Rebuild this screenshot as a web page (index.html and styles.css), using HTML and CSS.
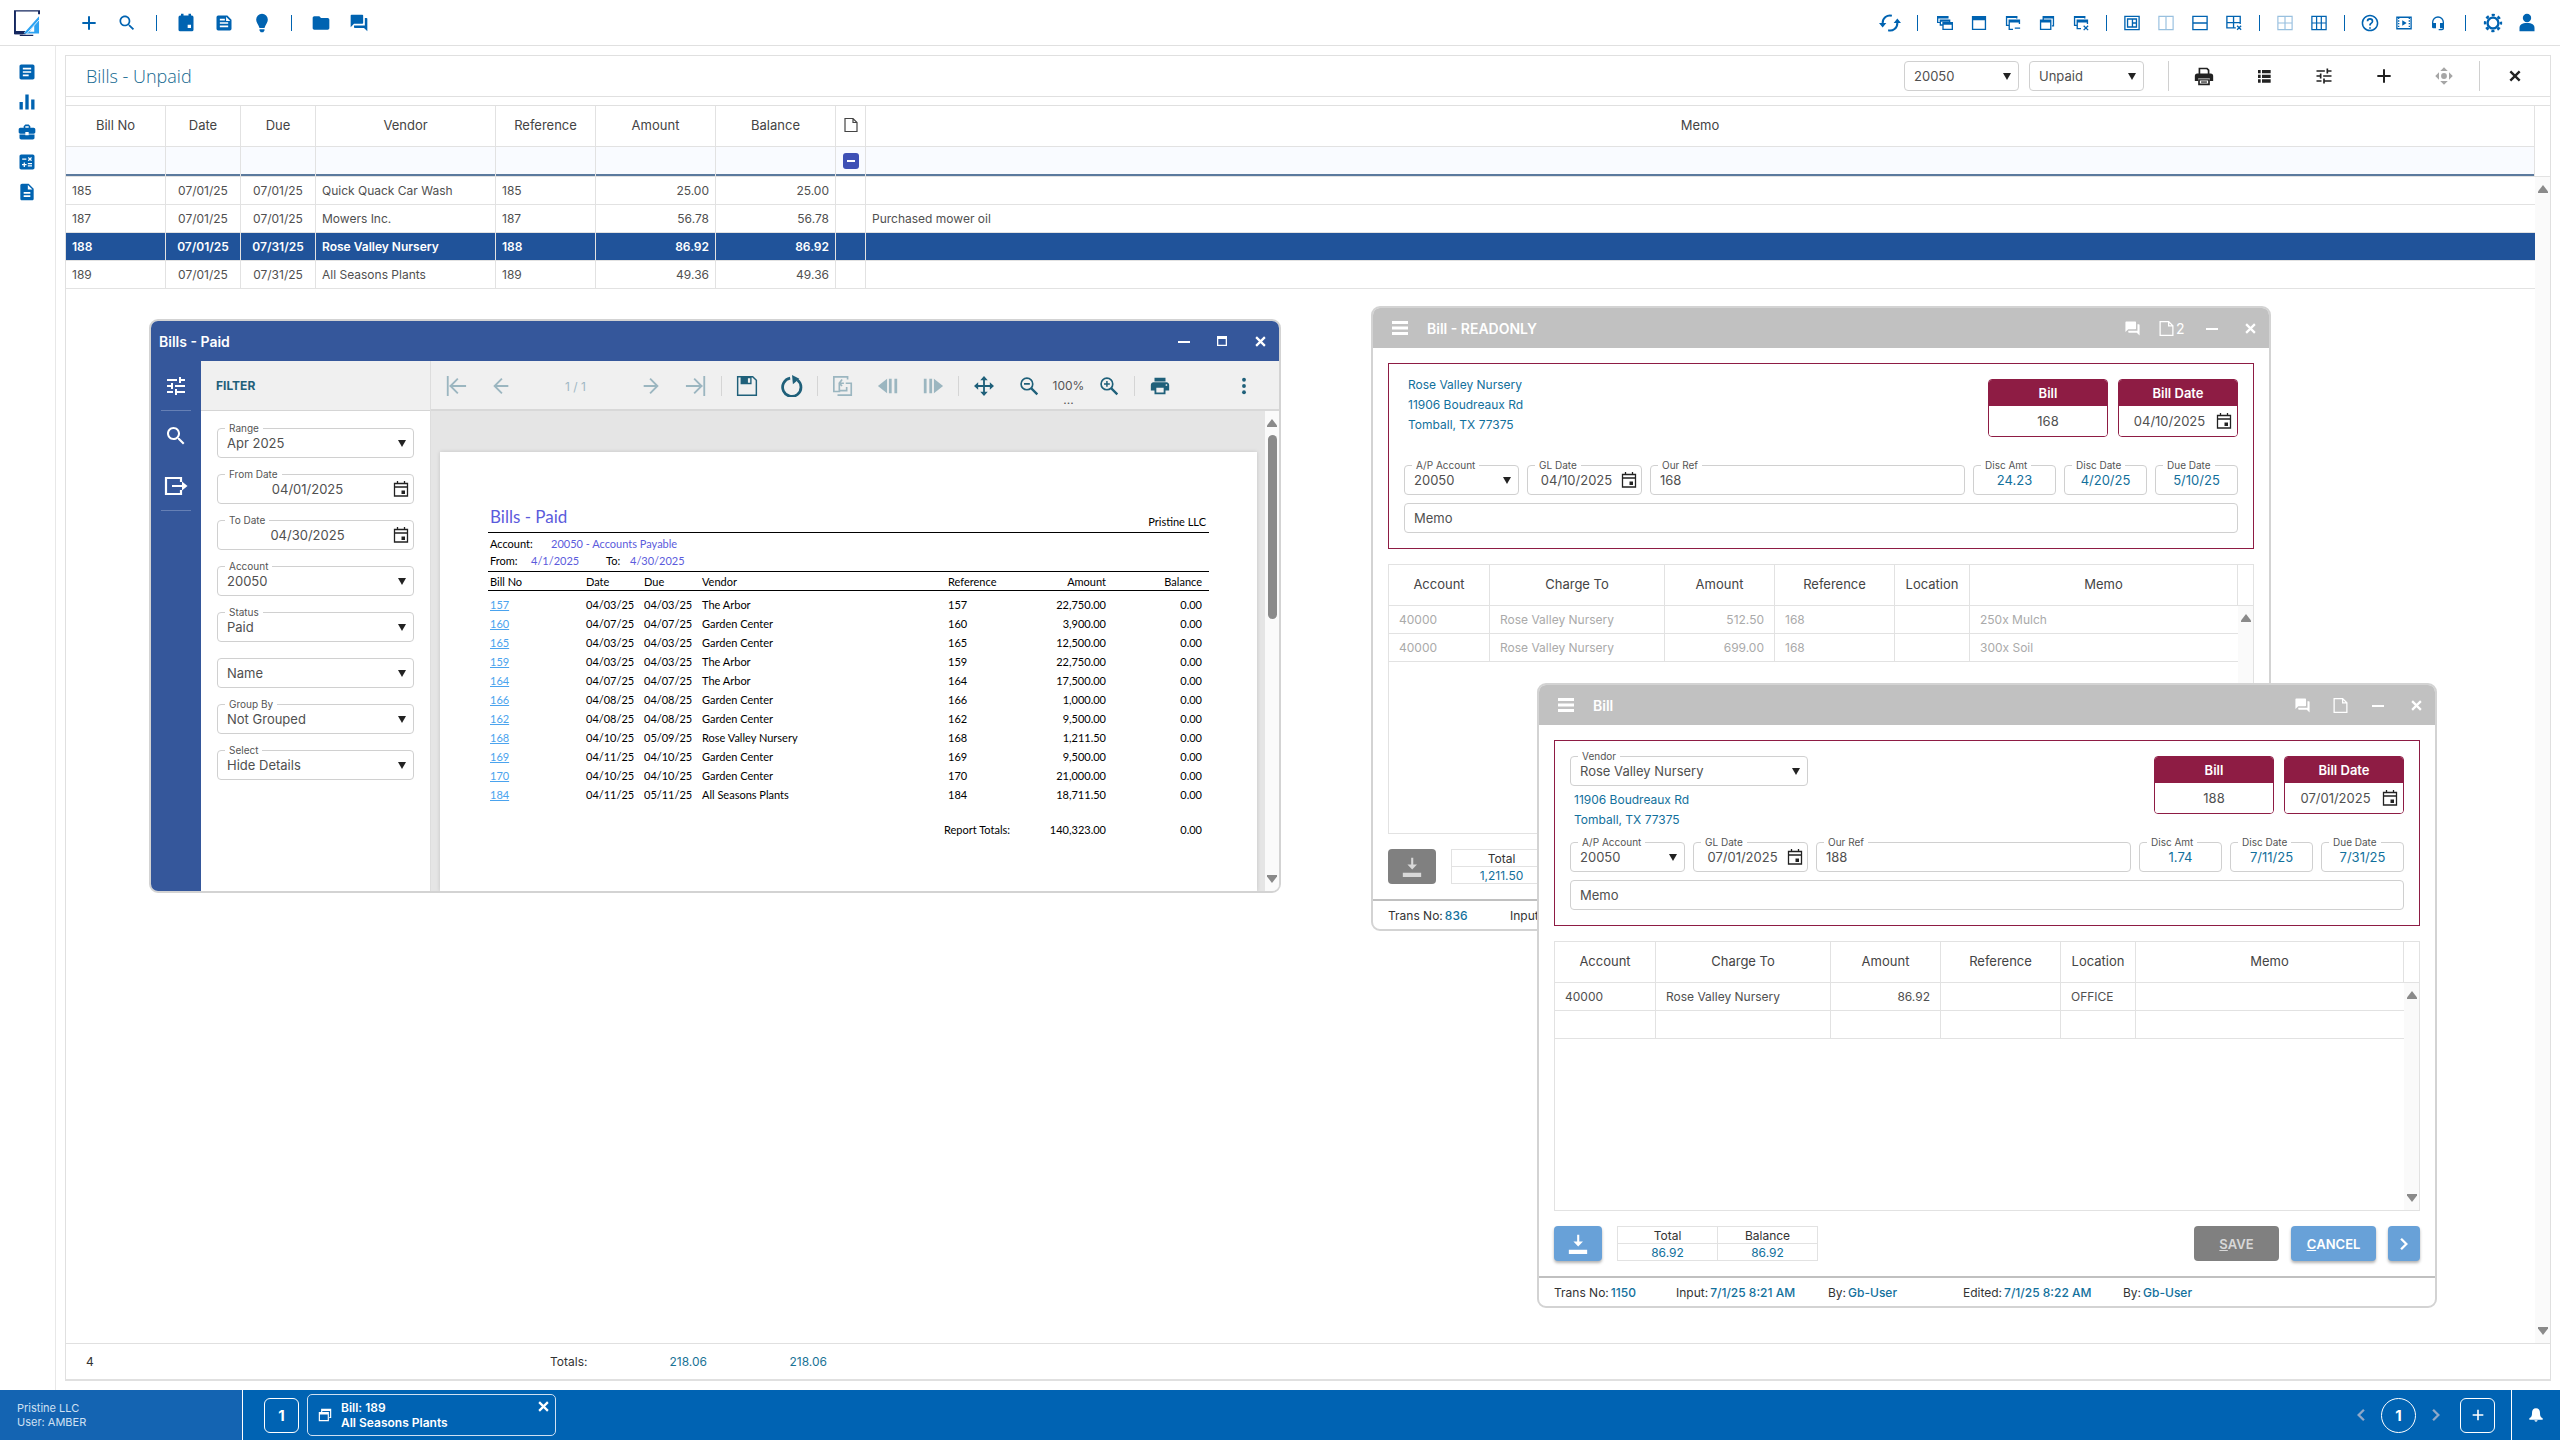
FILE: index.html
```html
<!DOCTYPE html>
<html lang="en">
<head>
  <meta charset="UTF-8">
  <meta name="viewport" content="width=device-width, initial-scale=1.0">
  <title>Bills - Unpaid</title>
  <link rel="stylesheet" href="styles.css">
</head>
<body>
  <!-- icon sprite -->
  <svg class="sprite" aria-hidden="true">
    <symbol id="i-plus" viewBox="0 0 24 24"><path d="M10.800 4h2.400v6.800H20v2.400h-6.800V20h-2.400v-6.800H4v-2.400h6.800z"/></symbol>
    <symbol id="i-search" viewBox="0 0 24 24"><path d="M15.500 14h-.790l-.280-.270C15.410 12.590 16 11.110 16 9.500 16 5.910 13.090 3 9.500 3S3 5.910 3 9.500 5.910 16 9.500 16c1.610 0 3.090-.590 4.230-1.570l.270.280v.790l5 4.990L20.490 19l-4.990-5zm-6 0C7.010 14 5 11.990 5 9.500S7.010 5 9.500 5 14 7.010 14 9.500 11.990 14 9.500 14z"/></symbol>
    <symbol id="i-calfull" viewBox="0 0 24 24"><path fill-rule="evenodd" d="M6 1v2H5a2 2 0 0 0-2 2v15a2 2 0 0 0 2 2h14a2 2 0 0 0 2-2V5a2 2 0 0 0-2-2h-1V1h-3v2H9V1zM14 14h4v4h-4z"/></symbol>
    <symbol id="i-note" viewBox="0 0 24 24"><path fill-rule="evenodd" d="M5 3a2 2 0 0 0-2 2v14a2 2 0 0 0 2 2h14a2 2 0 0 0 2-2V8l-5-5zM7 7h6v2H7zM7 11h10v2H7zM7 15h10v2H7zM14.500 4.500L19.500 9.500H14.500z"/></symbol>
    <symbol id="i-bulb" viewBox="0 0 24 24"><path d="M12 1a7 7 0 0 0-7 7c0 3.500 3 6 4 10h6c1-4 4-6.500 4-10a7 7 0 0 0-7-7zM9 19.500h6v1.500l-1.500 2h-3L9 21z"/></symbol>
    <symbol id="i-folder" viewBox="0 0 24 24"><path d="M10 4H4c-1.100 0-2 .9-2 2v12c0 1.100.9 2 2 2h16c1.100 0 2-.9 2-2V8c0-1.100-.9-2-2-2h-8z"/></symbol>
    <symbol id="i-chat" viewBox="0 0 24 24"><path d="M21 6h-2v9H6v2c0 .550.450 1 1 1h11l4 4V7c0-.550-.450-1-1-1zm-4 6V3c0-.550-.450-1-1-1H3c-.550 0-1 .450-1 1v14l4-4h10c.550 0 1-.450 1-1z"/></symbol>
    <symbol id="i-article" viewBox="0 0 24 24"><path d="M19 3H5c-1.100 0-2 .9-2 2v14c0 1.100.9 2 2 2h14c1.100 0 2-.9 2-2V5c0-1.100-.9-2-2-2zm-5 14H7v-2h7v2zm3-4H7v-2h10v2zm0-4H7V7h10v2z"/></symbol>
    <symbol id="i-chart" viewBox="0 0 24 24"><path d="M3 12h4v9H3zM10 3h4v18h-4zM17 9h4v12h-4z"/></symbol>
    <symbol id="i-case" viewBox="0 0 24 24"><path d="M10 16v-1H3v4c0 1.110.890 2 2 2h14c1.110 0 2-.890 2-2v-4h-7v1zm10-9h-4V5l-2-2h-4L8 5v2H4c-1.100 0-2 .9-2 2v3c0 1.110.890 2 2 2h6v-2h4v2h6c1.100 0 2-.9 2-2V9c0-1.100-.9-2-2-2zm-6 0h-4V5h4z"/></symbol>
    <symbol id="i-calc" viewBox="0 0 24 24"><path d="M19 3H5c-1.100 0-2 .9-2 2v14c0 1.100.9 2 2 2h14c1.100 0 2-.9 2-2V5c0-1.100-.9-2-2-2zm-5.970 4.060L14.090 6l1.410 1.410L16.910 6l1.060 1.060-1.410 1.410 1.410 1.410-1.060 1.060-1.410-1.400-1.410 1.410-1.060-1.060 1.410-1.410zM6.250 7.720h5v1.500h-5zM11.500 16h-2v2H8v-2H6v-1.500h2v-2h1.500v2h2zm6.500 1.250h-5v-1.500h5zm0-2.500h-5v-1.500h5z"/></symbol>
    <symbol id="i-doc" viewBox="0 0 24 24"><path d="M14 2H6c-1.100 0-2 .9-2 2v16c0 1.100.890 2 2 2h12c1.100 0 2-.9 2-2V8zm2 16H8v-2h8zm0-4H8v-2h8zm-3-5V3.500L18.500 9z"/></symbol>
    <symbol id="i-tune" viewBox="0 0 24 24"><path d="M3 17v2h6v-2zM3 5v2h10V5zm10 16v-2h8v-2h-8v-2h-2v6zM7 9v2H3v2h4v2h2V9zm14 4v-2H11v2zm-6-4h2V7h4V5h-4V3h-2z"/></symbol>
    <symbol id="i-refresh" viewBox="0 0 24 24"><g fill="none" stroke="currentColor" stroke-width="2.200"><path d="M4 14V12a8 8 0 0 1 10-8"/><path d="M20 10v2a8 8 0 0 1-10 8"/></g><path d="M0 12h8l-4 5zM16 12h8l-4-5z"/></symbol>
    <symbol id="i-cascade" viewBox="0 0 18 18"><path fill-rule="evenodd" d="M0 1h13v3h-1V4H1.500v4H3v1H0zM3 5h12v3h-1.500v-.5H4.500v3H6V12H3zM6 8h12v9H6zM7.500 11v4.500h9V11z"/></symbol>
    <symbol id="i-window" viewBox="0 0 18 18"><path fill-rule="evenodd" d="M1 1h16v16H1zM2.500 6v9.500h13V6z"/></symbol>
    <symbol id="i-winmin" viewBox="0 0 18 18"><path fill-rule="evenodd" d="M1 1h13v3h-1.500v-.5h-10V11H4v1.500H1zM4 5h13v5h-1.500V8.500h-10v7H9V17H4zM11 14h6v1.500h-6z"/></symbol>
    <symbol id="i-restore" viewBox="0 0 18 18"><path fill-rule="evenodd" d="M4 1h13v12h-2.500v-1.500h1V4h-10v1H4zM1 5h13v12H1zM2.500 8.500v7h10v-7z"/></symbol>
    <symbol id="i-winclose" viewBox="0 0 18 18"><path fill-rule="evenodd" d="M1 1h13v3h-1.500v-.5h-10V11H4v1.500H1zM4 5h13v5h-1.500V8.500h-10v6H9V16H4z"/><path d="M12 12l5 5M17 12l-5 5" stroke="currentColor" stroke-width="1.500"/></symbol>
    <symbol id="i-dash" viewBox="0 0 18 18"><g fill="none" stroke="currentColor" stroke-width="1.500"><path d="M1 1.500h16v15H1z"/><path d="M4 4.500h10v9H4zM9.500 4.500v9M9.500 9H14"/></g></symbol>
    <symbol id="i-cols" viewBox="0 0 18 18"><path d="M1 1.500h16v15H1zM9 1.500v15" fill="none" stroke="currentColor" stroke-width="1.300"/></symbol>
    <symbol id="i-rows" viewBox="0 0 18 18"><path d="M1 1.500h16v15H1zM1 9h16" fill="none" stroke="currentColor" stroke-width="1.500"/></symbol>
    <symbol id="i-gridx" viewBox="0 0 18 18"><path d="M11 14.500H1v-13h15V10M1 8.500h15M8.500 1.500v13M12.500 12l4.500 4.500M17 12l-4.500 4.500" fill="none" stroke="currentColor" stroke-width="1.500"/></symbol>
    <symbol id="i-grid4" viewBox="0 0 18 18"><path d="M1 1.500h16v15H1zM1 9h16M9 1.500v15" fill="none" stroke="currentColor" stroke-width="1.300"/></symbol>
    <symbol id="i-grid6" viewBox="0 0 18 18"><path d="M1 1.500h16v15H1zM1 9h16M6.300 1.500v15M11.600 1.500v15" fill="none" stroke="currentColor" stroke-width="1.400"/></symbol>
    <symbol id="i-help" viewBox="0 0 24 24"><path d="M12 2C6.480 2 2 6.480 2 12s4.480 10 10 10 10-4.480 10-10S17.520 2 12 2zm1 17h-2v-2h2zm-1 1.200A8.200 8.200 0 1 1 12 3.800a8.200 8.200 0 0 1 0 16.400zM12 6a4 4 0 0 0-4 4h2a2 2 0 1 1 4 0c0 2-3 1.750-3 5h2c0-2.250 3-2.500 3-5a4 4 0 0 0-4-4z"/></symbol>
    <symbol id="i-film" viewBox="0 0 18 18"><path d="M1 2.500h16v13H1z" fill="none" stroke="currentColor" stroke-width="1.500"/><path d="M3 3v12M15 3v12" stroke="currentColor" stroke-width="1.500" stroke-dasharray="1.500 1.500"/><path d="M7 6l5 3-5 3z"/></symbol>
    <symbol id="i-headset" viewBox="0 0 24 24"><path d="M4 17v-6a8 8 0 0 1 16 0v9a2 2 0 0 1-2 2h-5" fill="none" stroke="currentColor" stroke-width="2"/><path d="M3 12h6v8H5a2 2 0 0 1-2-2zM15 12h6v8h-6z"/></symbol>
    <symbol id="i-gear" viewBox="0 0 24 24"><circle cx="12" cy="12" r="6.500" fill="none" stroke="currentColor" stroke-width="2.800"/><circle cx="12" cy="12" r="9.500" fill="none" stroke="currentColor" stroke-width="3" stroke-dasharray="3.730 3.730" stroke-dashoffset="1.860"/></symbol>
    <symbol id="i-user" viewBox="0 0 24 24"><circle cx="12" cy="6" r="5"/><path d="M3 22v-4c0-4 3-6 9-6s9 2 9 6v4z"/></symbol>
    <symbol id="i-print-line" viewBox="0 0 24 24"><path fill-rule="evenodd" d="M6 2h10l2.500 2.500V9H20a3 3 0 0 1 3 3v6h-4v-3H5v3H1v-6a3 3 0 0 1 3-3h1.500V2zm1.500 2v5h9V5.500L15 4z"/><path fill-rule="evenodd" d="M5 16h14v7H5zM7 17.500v3.500h10v-3.500z"/><path d="M8.500 18.500h7V20h-7z"/></symbol>
    <symbol id="i-list" viewBox="0 0 24 24"><path d="M3 3h4v5H3zM9 3h13v5H9zM3 10h4v5H3zM9 10h13v5H9zM3 17h4v5H3zM9 17h13v5H9z"/></symbol>
    <symbol id="i-target" viewBox="0 0 24 24"><circle cx="12" cy="12" r="3.500"/><path d="M7.500 6L12 1.500 16.500 6zM7.500 18l4.500 4.500 4.500-4.500zM6 7.500L1.500 12 6 16.500zM18 7.500l4.500 4.500-4.500 4.500z"/></symbol>
    <symbol id="i-x" viewBox="0 0 24 24"><path d="M5 5l14 14M19 5L5 19" stroke="currentColor" stroke-width="3.600"/></symbol>
    <symbol id="i-page" viewBox="0 0 16 16"><path d="M2 1.500h8l4 4v9H2zM10 1.500v4h4" fill="none" stroke="currentColor" stroke-width="1.200"/></symbol>
    <symbol id="i-cal" viewBox="0 0 16 16"><path d="M1.500 2.500h13v12.500h-13zM1.500 6h13M4.500 0v3M11.500 0v3" fill="none" stroke="currentColor" stroke-width="1.300"/><path d="M8.500 9.500h3.500V13H8.500z"/></symbol>
    <symbol id="i-caret" viewBox="0 0 8 7"><path d="M0 0h8L4 7z"/></symbol>
    <symbol id="i-up" viewBox="0 0 10 8"><path d="M5 0l5 6.500V8H0V6.500z"/></symbol>
    <symbol id="i-down" viewBox="0 0 10 8"><path d="M5 8l5-6.500V0H0v1.500z"/></symbol>
    <symbol id="i-menu" viewBox="0 0 16 14"><path d="M0 0h16v3H0zM0 5.500h16v3H0zM0 11h16v3H0z"/></symbol>
    <symbol id="i-min" viewBox="0 0 12 12"><path d="M0 6h12v2H0z"/></symbol>
    <symbol id="i-max" viewBox="0 0 12 12"><path fill-rule="evenodd" d="M1 1h10v10H1zM2.300 4v5.700h7.400V4z"/></symbol>
    <symbol id="i-first" viewBox="0 0 24 24"><path d="M3 1v22M23 12H5M14 4l-8 8 8 8" fill="none" stroke="currentColor" stroke-width="2"/></symbol>
    <symbol id="i-prev" viewBox="0 0 24 24"><path d="M20 12H5M13 4l-8 8 8 8" fill="none" stroke="currentColor" stroke-width="2"/></symbol>
    <symbol id="i-next" viewBox="0 0 24 24"><path d="M4 12h15M11 4l8 8-8 8" fill="none" stroke="currentColor" stroke-width="2"/></symbol>
    <symbol id="i-last" viewBox="0 0 24 24"><path d="M21 1v22M1 12h18M10 4l8 8-8 8" fill="none" stroke="currentColor" stroke-width="2"/></symbol>
    <symbol id="i-save" viewBox="0 0 24 24"><path d="M1.800 1.800h16.400l4 4v16.400H1.800z" fill="none" stroke="currentColor" stroke-width="1.600"/><path fill-rule="evenodd" d="M5 2h12v8H5zM13 3.500v5h2.500v-5z"/></symbol>
    <symbol id="i-reload" viewBox="0 0 24 24"><path d="M18 5.500a10 10 0 1 1-8-2" fill="none" stroke="currentColor" stroke-width="3"/><path d="M12 0l8 4-7 6z"/></symbol>
    <symbol id="i-multi" viewBox="0 0 24 24"><path d="M9 18H2V2h15v3M6 22h15V9h-6M16 13v4H8V9h5M11 5L8 9l3 3" fill="none" stroke="currentColor" stroke-width="1.800"/></symbol>
    <symbol id="i-back" viewBox="0 0 24 24"><path d="M1 12l10-8v16zM13 4h3v16h-3zM19 4h3v16h-3z"/></symbol>
    <symbol id="i-fwd" viewBox="0 0 24 24"><path d="M23 12L13 4v16zM8 4h3v16H8zM2 4h3v16H2z"/></symbol>
    <symbol id="i-move" viewBox="0 0 24 24"><path d="M12 3v18M3 12h18" stroke="currentColor" stroke-width="2.200"/><path d="M12 0l4.500 5h-9zM12 24l4.500-5h-9zM0 12l5-4.500v9zM24 12l-5-4.500v9z"/></symbol>
    <symbol id="i-zoomout" viewBox="0 0 24 24"><circle cx="9.500" cy="9.500" r="7" fill="none" stroke="currentColor" stroke-width="2"/><path d="M14.500 14.500l7.500 7.500" stroke="currentColor" stroke-width="2.800"/><path d="M6 8.500h7v2H6z"/></symbol>
    <symbol id="i-zoomin" viewBox="0 0 24 24"><circle cx="9.500" cy="9.500" r="7" fill="none" stroke="currentColor" stroke-width="2"/><path d="M14.500 14.500l7.500 7.500" stroke="currentColor" stroke-width="2.800"/><path d="M6 8.600h2.600V6h1.800v2.600H13v1.800h-2.600V13H8.600v-2.600H6z"/></symbol>
    <symbol id="i-print" viewBox="0 0 24 24"><path d="M19 8H5c-1.660 0-3 1.340-3 3v6h4v4h12v-4h4v-6c0-1.660-1.340-3-3-3zm-3 11H8v-5h8zm3-7c-.550 0-1-.450-1-1s.450-1 1-1 1 .450 1 1-.450 1-1 1zM18 3H6v4h12z"/></symbol>
    <symbol id="i-more" viewBox="0 0 24 24"><circle cx="12" cy="4.500" r="2.300"/><circle cx="12" cy="12" r="2.300"/><circle cx="12" cy="19.500" r="2.300"/></symbol>
    <symbol id="i-export" viewBox="0 0 24 24"><path d="M17 8V4H2v16h15v-4M8 12h13" fill="none" stroke="currentColor" stroke-width="2.200"/><path d="M18 7.500l5.500 4.500-5.500 4.500z"/></symbol>
    <symbol id="i-download" viewBox="0 0 24 24"><path d="M11 1h2.500v8H18l-5.750 6L6.500 9H11zM1 19h22v5H1z"/></symbol>
    <symbol id="i-chev-l" viewBox="0 0 12 12"><path d="M8.500 1.500L4 6l4.500 4.500" fill="none" stroke="currentColor" stroke-width="2"/></symbol>
    <symbol id="i-chev-r" viewBox="0 0 12 12"><path d="M3.500 1.500L8 6l-4.500 4.500" fill="none" stroke="currentColor" stroke-width="2"/></symbol>
    <symbol id="i-bell" viewBox="0 0 24 24"><path d="M12 22a2.500 2.500 0 0 0 2.500-2h-5a2.500 2.500 0 0 0 2.500 2zM12 2c-4 0-6 3-6 7 0 5-1 6-4 8v2h20v-2c-3-2-4-3-4-8 0-4-2-7-6-7z"/></symbol>
  </svg>

  <header class="topbar">
    <svg class="logo" viewBox="0 0 27 42" preserveAspectRatio="none" role="img" aria-label="Home">
      <path d="M26 7V1.500H1V38h11" fill="none" stroke="#14275f" stroke-width="2"/>
      <path d="M1 34h11l-3 5H1zM6 40h14v2H6z" fill="#14275f"/>
      <path d="M26 10v28H10zM21 25l-5 10h5z" fill="#2ea3f2" fill-rule="evenodd"/>
      <path d="M14 37L26 16" stroke="#fff" stroke-width="1"/>
    </svg>
    <nav class="tools tools-left">
      <button aria-label="New"><svg><use href="#i-plus"/></svg></button>
      <button aria-label="Search"><svg><use href="#i-search"/></svg></button>
      <i class="sep wide"></i>
      <button aria-label="Calendar"><svg><use href="#i-calfull"/></svg></button>
      <button aria-label="Notes"><svg><use href="#i-note"/></svg></button>
      <button aria-label="Tips"><svg><use href="#i-bulb"/></svg></button>
      <i class="sep wide"></i>
      <button aria-label="Files"><svg><use href="#i-folder"/></svg></button>
      <button aria-label="Messages"><svg><use href="#i-chat"/></svg></button>
    </nav>
    <nav class="tools tools-right">
      <button aria-label="Refresh"><svg class="lg"><use href="#i-refresh"/></svg></button>
      <i class="sep wide"></i>
      <button aria-label="Cascade"><svg class="sm"><use href="#i-cascade"/></svg></button>
      <button aria-label="Maximize"><svg class="sm"><use href="#i-window"/></svg></button>
      <button aria-label="Minimize all"><svg class="sm"><use href="#i-winmin"/></svg></button>
      <button aria-label="Restore all"><svg class="sm"><use href="#i-restore"/></svg></button>
      <button aria-label="Close all"><svg class="sm"><use href="#i-winclose"/></svg></button>
      <i class="sep"></i>
      <button aria-label="Dashboard"><svg class="sm"><use href="#i-dash"/></svg></button>
      <button aria-label="Columns" disabled><svg class="sm"><use href="#i-cols"/></svg></button>
      <button aria-label="Rows"><svg class="sm"><use href="#i-rows"/></svg></button>
      <button aria-label="Close tiles"><svg class="sm"><use href="#i-gridx"/></svg></button>
      <i class="sep"></i>
      <button aria-label="Four tiles" disabled><svg class="sm"><use href="#i-grid4"/></svg></button>
      <button aria-label="Six tiles"><svg class="sm"><use href="#i-grid6"/></svg></button>
      <i class="sep"></i>
      <button aria-label="Help"><svg><use href="#i-help"/></svg></button>
      <button aria-label="Videos"><svg class="sm"><use href="#i-film"/></svg></button>
      <button aria-label="Support"><svg class="sm"><use href="#i-headset"/></svg></button>
      <i class="sep wide"></i>
      <button aria-label="Settings"><svg><use href="#i-gear"/></svg></button>
      <button aria-label="Account"><svg><use href="#i-user"/></svg></button>
    </nav>
  </header>

  <div class="workspace">
    <nav class="sidebar">
      <button aria-label="Ledger"><svg><use href="#i-article"/></svg></button>
      <button aria-label="Reports"><svg><use href="#i-chart"/></svg></button>
      <button aria-label="Business"><svg><use href="#i-case"/></svg></button>
      <button aria-label="Calculator"><svg><use href="#i-calc"/></svg></button>
      <button aria-label="Documents"><svg><use href="#i-doc"/></svg></button>
    </nav>

    <main class="desktop">
      <section class="panel">
        <div class="panel-head">
          <h1>Bills - Unpaid</h1>
          <div class="field head-select">
            <select aria-label="Account"><option>20050</option></select>
            <svg class="caret"><use href="#i-caret"/></svg>
          </div>
          <div class="field head-select">
            <select aria-label="Status"><option>Unpaid</option></select>
            <svg class="caret"><use href="#i-caret"/></svg>
          </div>
          <div class="head-tools">
            <button aria-label="Print"><svg><use href="#i-print-line"/></svg></button>
            <button aria-label="List"><svg class="sm"><use href="#i-list"/></svg></button>
            <button aria-label="Filter"><svg><use href="#i-tune"/></svg></button>
            <button aria-label="Add"><svg><use href="#i-plus"/></svg></button>
            <button aria-label="Locate" disabled><svg><use href="#i-target"/></svg></button>
          </div>
          <button class="panel-close" aria-label="Close"><svg class="sm"><use href="#i-x"/></svg></button>
        </div>

        <div class="grid-wrap">
          <div class="grid-main">
            <table class="grid">
              <colgroup>
                <col class="w100"><col class="w75"><col class="w75"><col class="w180"><col class="w100"><col class="w120"><col class="w120"><col class="w30"><col>
              </colgroup>
              <thead>
                <tr><th>Bill No</th><th>Date</th><th>Due</th><th>Vendor</th><th>Reference</th><th>Amount</th><th>Balance</th><th class="tight"><svg class="page-icon"><use href="#i-page"/></svg></th><th>Memo</th></tr>
                <tr class="filter-row"><td></td><td></td><td></td><td></td><td></td><td></td><td></td><td class="tight"><button class="minus" aria-label="Any attachment"></button></td><td></td></tr>
              </thead>
              <tbody>
                <tr><td>185</td><td class="c">07/01/25</td><td class="c">07/01/25</td><td>Quick Quack Car Wash</td><td>185</td><td class="r">25.00</td><td class="r">25.00</td><td></td><td></td></tr>
                <tr><td>187</td><td class="c">07/01/25</td><td class="c">07/01/25</td><td>Mowers Inc.</td><td>187</td><td class="r">56.78</td><td class="r">56.78</td><td></td><td>Purchased mower oil</td></tr>
                <tr class="selected"><td>188</td><td class="c">07/01/25</td><td class="c">07/31/25</td><td>Rose Valley Nursery</td><td>188</td><td class="r">86.92</td><td class="r">86.92</td><td></td><td></td></tr>
                <tr><td>189</td><td class="c">07/01/25</td><td class="c">07/31/25</td><td>All Seasons Plants</td><td>189</td><td class="r">49.36</td><td class="r">49.36</td><td></td><td></td></tr>
              </tbody>
            </table>
          </div>
          <div class="scroll-col">
            <div class="scroll-head"></div>
            <div class="scroll"><svg><use href="#i-up"/></svg><svg class="end"><use href="#i-down"/></svg></div>
          </div>
        </div>

        <div class="panel-foot">
          <span class="count">4</span>
          <span class="totals-label">Totals:</span>
          <span class="total">218.06</span>
          <span class="total">218.06</span>
        </div>
      </section>

      <!-- Bills - Paid report -->
      <section class="window report">
        <header class="win-head">
          <h2>Bills - Paid</h2>
          <button aria-label="Minimize"><svg class="xs"><use href="#i-min"/></svg></button>
          <button aria-label="Maximize"><svg class="xs"><use href="#i-max"/></svg></button>
          <button aria-label="Close"><svg class="x"><use href="#i-x"/></svg></button>
        </header>
        <div class="report-body">
          <nav class="rail">
            <button aria-label="Filter"><svg><use href="#i-tune"/></svg></button>
            <button aria-label="Search"><svg><use href="#i-search"/></svg></button>
            <button aria-label="Export"><svg><use href="#i-export"/></svg></button>
          </nav>
          <form class="filters">
            <h3>FILTER</h3>
            <div class="filter-fields">
              <div class="field"><label for="range">Range</label><select id="range"><option>Apr 2025</option></select><svg class="caret"><use href="#i-caret"/></svg></div>
              <div class="field date"><label for="from">From Date</label><input id="from" type="text" value="04/01/2025"><svg class="cal"><use href="#i-cal"/></svg></div>
              <div class="field date"><label for="to">To Date</label><input id="to" type="text" value="04/30/2025"><svg class="cal"><use href="#i-cal"/></svg></div>
              <div class="field"><label for="acct">Account</label><select id="acct"><option>20050</option></select><svg class="caret"><use href="#i-caret"/></svg></div>
              <div class="field"><label for="status">Status</label><select id="status"><option>Paid</option></select><svg class="caret"><use href="#i-caret"/></svg></div>
              <div class="field"><select aria-label="Name"><option>Name</option></select><svg class="caret"><use href="#i-caret"/></svg></div>
              <div class="field"><label for="group">Group By</label><select id="group"><option>Not Grouped</option></select><svg class="caret"><use href="#i-caret"/></svg></div>
              <div class="field"><label for="details">Select</label><select id="details"><option>Hide Details</option></select><svg class="caret"><use href="#i-caret"/></svg></div>
            </div>
          </form>
          <div class="viewer">
            <div class="viewer-bar">
              <button disabled aria-label="First page"><svg><use href="#i-first"/></svg></button>
              <button disabled aria-label="Previous page"><svg><use href="#i-prev"/></svg></button>
              <span class="page-no">1 / 1</span>
              <button disabled aria-label="Next page"><svg><use href="#i-next"/></svg></button>
              <button disabled aria-label="Last page"><svg><use href="#i-last"/></svg></button>
              <i class="sep"></i>
              <button aria-label="Save"><svg><use href="#i-save"/></svg></button>
              <button aria-label="Reload"><svg><use href="#i-reload"/></svg></button>
              <i class="sep"></i>
              <button disabled aria-label="Drill up"><svg><use href="#i-multi"/></svg></button>
              <button disabled aria-label="Back"><svg><use href="#i-back"/></svg></button>
              <button disabled aria-label="Forward"><svg><use href="#i-fwd"/></svg></button>
              <i class="sep"></i>
              <button aria-label="Pan"><svg class="md"><use href="#i-move"/></svg></button>
              <button aria-label="Zoom out"><svg class="md"><use href="#i-zoomout"/></svg></button>
              <span class="zoom-level">100%<br>...</span>
              <button aria-label="Zoom in"><svg class="md"><use href="#i-zoomin"/></svg></button>
              <i class="sep"></i>
              <button aria-label="Print"><svg><use href="#i-print"/></svg></button>
              <button class="more" aria-label="More"><svg class="md"><use href="#i-more"/></svg></button>
            </div>
            <div class="viewer-body">
              <article class="paper">
                <div class="paper-head"><h3>Bills - Paid</h3><span>Pristine LLC</span></div>
                <div class="paper-params">
                  <p><span class="p-account">Account:</span><b>20050 - Accounts Payable</b></p>
                  <p><span class="p-from">From:</span><b class="p-date">4/1/2025</b><span class="p-to">To:</span><b>4/30/2025</b></p>
                </div>
                <table>
                  <colgroup><col class="c-no"><col class="c-date"><col class="c-date"><col class="c-vendor"><col class="c-ref"><col class="c-amt"><col class="c-bal"></colgroup>
                  <thead><tr><th>Bill No</th><th>Date</th><th>Due</th><th>Vendor</th><th>Reference</th><th class="r">Amount</th><th class="r">Balance</th></tr></thead>
                  <tbody>
                    <tr><td><a href="#">157</a></td><td>04/03/25</td><td>04/03/25</td><td>The Arbor</td><td>157</td><td class="r">22,750.00</td><td class="r">0.00</td></tr>
                    <tr><td><a href="#">160</a></td><td>04/07/25</td><td>04/07/25</td><td>Garden Center</td><td>160</td><td class="r">3,900.00</td><td class="r">0.00</td></tr>
                    <tr><td><a href="#">165</a></td><td>04/03/25</td><td>04/03/25</td><td>Garden Center</td><td>165</td><td class="r">12,500.00</td><td class="r">0.00</td></tr>
                    <tr><td><a href="#">159</a></td><td>04/03/25</td><td>04/03/25</td><td>The Arbor</td><td>159</td><td class="r">22,750.00</td><td class="r">0.00</td></tr>
                    <tr><td><a href="#">164</a></td><td>04/07/25</td><td>04/07/25</td><td>The Arbor</td><td>164</td><td class="r">17,500.00</td><td class="r">0.00</td></tr>
                    <tr><td><a href="#">166</a></td><td>04/08/25</td><td>04/08/25</td><td>Garden Center</td><td>166</td><td class="r">1,000.00</td><td class="r">0.00</td></tr>
                    <tr><td><a href="#">162</a></td><td>04/08/25</td><td>04/08/25</td><td>Garden Center</td><td>162</td><td class="r">9,500.00</td><td class="r">0.00</td></tr>
                    <tr><td><a href="#">168</a></td><td>04/10/25</td><td>05/09/25</td><td>Rose Valley Nursery</td><td>168</td><td class="r">1,211.50</td><td class="r">0.00</td></tr>
                    <tr><td><a href="#">169</a></td><td>04/11/25</td><td>04/10/25</td><td>Garden Center</td><td>169</td><td class="r">9,500.00</td><td class="r">0.00</td></tr>
                    <tr><td><a href="#">170</a></td><td>04/10/25</td><td>04/10/25</td><td>Garden Center</td><td>170</td><td class="r">21,000.00</td><td class="r">0.00</td></tr>
                    <tr><td><a href="#">184</a></td><td>04/11/25</td><td>05/11/25</td><td>All Seasons Plants</td><td>184</td><td class="r">18,711.50</td><td class="r">0.00</td></tr>
                  </tbody>
                  <tfoot>
                    <tr><td class="r tot" colspan="5">Report Totals:</td><td class="r">140,323.00</td><td class="r">0.00</td></tr>
                  </tfoot>
                </table>
              </article>
              <div class="scroll"><svg><use href="#i-up"/></svg><div class="thumb"></div><svg class="end"><use href="#i-down"/></svg></div>
            </div>
          </div>
        </div>
      </section>

      <!-- Bill 168, read only -->
      <section class="window bill bill-168">
        <header class="win-head">
          <button aria-label="Menu"><svg class="menu"><use href="#i-menu"/></svg></button>
          <h2>Bill - READONLY</h2>
          <button aria-label="Messages"><svg class="fold"><use href="#i-chat"/></svg></button>
          <button class="attach" aria-label="Attachments"><svg class="fold"><use href="#i-page"/></svg><span>2</span></button>
          <button aria-label="Minimize"><svg class="xs"><use href="#i-min"/></svg></button>
          <button aria-label="Close"><svg class="x"><use href="#i-x"/></svg></button>
        </header>
        <div class="bill-body">
          <div class="card">
            <div class="card-top">
              <div class="party">
                <address>Rose Valley Nursery<br>11906 Boudreaux Rd<br>Tomball, TX 77375</address>
              </div>
              <div class="stamp"><label for="no168">Bill</label><input id="no168" type="text" value="168" readonly></div>
              <div class="stamp date"><label for="bd168">Bill Date</label><input id="bd168" type="text" value="04/10/2025" readonly><svg class="cal"><use href="#i-cal"/></svg></div>
            </div>
            <div class="card-row">
              <div class="field w115"><label for="ap168">A/P Account</label><select id="ap168"><option>20050</option></select><svg class="caret"><use href="#i-caret"/></svg></div>
              <div class="field date w115"><label for="gl168">GL Date</label><input id="gl168" type="text" value="04/10/2025" readonly><svg class="cal"><use href="#i-cal"/></svg></div>
              <div class="field grow"><label for="ref168">Our Ref</label><input id="ref168" type="text" value="168" readonly></div>
              <div class="field calc"><label for="da168">Disc Amt</label><input id="da168" type="text" value="24.23" readonly></div>
              <div class="field calc"><label for="dd168">Disc Date</label><input id="dd168" type="text" value="4/20/25" readonly></div>
              <div class="field calc"><label for="du168">Due Date</label><input id="du168" type="text" value="5/10/25" readonly></div>
            </div>
            <div class="field"><input aria-label="Memo" type="text" placeholder="Memo" readonly></div>
          </div>
          <div class="lines muted">
            <div class="grid-main">
              <table class="grid">
                <colgroup><col class="w101"><col class="w175"><col class="w110"><col class="w120"><col class="w75"><col></colgroup>
                <thead><tr><th>Account</th><th>Charge To</th><th>Amount</th><th>Reference</th><th class="tight">Location</th><th>Memo</th></tr></thead>
                <tbody>
                  <tr><td>40000</td><td>Rose Valley Nursery</td><td class="r">512.50</td><td>168</td><td></td><td>250x Mulch</td></tr>
                  <tr><td>40000</td><td>Rose Valley Nursery</td><td class="r">699.00</td><td>168</td><td></td><td>300x Soil</td></tr>
                </tbody>
              </table>
            </div>
            <div class="scroll-col">
              <div class="scroll-head"></div>
              <div class="scroll"><svg><use href="#i-up"/></svg><svg class="end"><use href="#i-down"/></svg></div>
            </div>
          </div>
          <div class="actions">
            <button class="btn icon-btn" disabled aria-label="Download"><svg><use href="#i-download"/></svg></button>
            <table class="sums">
              <tr><th>Total</th><th>Balance</th></tr>
              <tr><td>1,211.50</td><td>0.00</td></tr>
            </table>
          </div>
        </div>
        <footer class="audit">
          <span class="a-trans">Trans No:<b>836</b></span><span class="a-input">Input:</span>
        </footer>
      </section>

      <!-- Bill 188 -->
      <section class="window bill bill-188">
        <header class="win-head">
          <button aria-label="Menu"><svg class="menu"><use href="#i-menu"/></svg></button>
          <h2>Bill</h2>
          <button aria-label="Messages"><svg class="fold"><use href="#i-chat"/></svg></button>
          <button aria-label="Attachments"><svg class="fold"><use href="#i-page"/></svg></button>
          <button aria-label="Minimize"><svg class="xs"><use href="#i-min"/></svg></button>
          <button aria-label="Close"><svg class="x"><use href="#i-x"/></svg></button>
        </header>
        <div class="bill-body">
          <div class="card">
            <div class="card-top">
              <div class="party">
                <div class="field vendor"><label for="v188">Vendor</label><select id="v188"><option>Rose Valley Nursery</option></select><svg class="caret"><use href="#i-caret"/></svg></div>
                <address>11906 Boudreaux Rd<br>Tomball, TX 77375</address>
              </div>
              <div class="stamp"><label for="no188">Bill</label><input id="no188" type="text" value="188"></div>
              <div class="stamp date"><label for="bd188">Bill Date</label><input id="bd188" type="text" value="07/01/2025"><svg class="cal"><use href="#i-cal"/></svg></div>
            </div>
            <div class="card-row">
              <div class="field w115"><label for="ap188">A/P Account</label><select id="ap188"><option>20050</option></select><svg class="caret"><use href="#i-caret"/></svg></div>
              <div class="field date w115"><label for="gl188">GL Date</label><input id="gl188" type="text" value="07/01/2025"><svg class="cal"><use href="#i-cal"/></svg></div>
              <div class="field grow"><label for="ref188">Our Ref</label><input id="ref188" type="text" value="188"></div>
              <div class="field calc"><label for="da188">Disc Amt</label><input id="da188" type="text" value="1.74" readonly></div>
              <div class="field calc"><label for="dd188">Disc Date</label><input id="dd188" type="text" value="7/11/25" readonly></div>
              <div class="field calc"><label for="du188">Due Date</label><input id="du188" type="text" value="7/31/25" readonly></div>
            </div>
            <div class="field"><input aria-label="Memo" type="text" placeholder="Memo"></div>
          </div>
          <div class="lines">
            <div class="grid-main">
              <table class="grid">
                <colgroup><col class="w101"><col class="w175"><col class="w110"><col class="w120"><col class="w75"><col></colgroup>
                <thead><tr><th>Account</th><th>Charge To</th><th>Amount</th><th>Reference</th><th class="tight">Location</th><th>Memo</th></tr></thead>
                <tbody>
                  <tr><td>40000</td><td>Rose Valley Nursery</td><td class="r">86.92</td><td></td><td>OFFICE</td><td></td></tr>
                  <tr><td></td><td></td><td></td><td></td><td></td><td></td></tr>
                </tbody>
              </table>
            </div>
            <div class="scroll-col">
              <div class="scroll-head"></div>
              <div class="scroll"><svg><use href="#i-up"/></svg><svg class="end"><use href="#i-down"/></svg></div>
            </div>
          </div>
          <div class="actions">
            <button class="btn icon-btn" aria-label="Download"><svg><use href="#i-download"/></svg></button>
            <table class="sums">
              <tr><th>Total</th><th>Balance</th></tr>
              <tr><td>86.92</td><td>86.92</td></tr>
            </table>
            <button class="btn save" disabled><u>S</u>AVE</button>
            <button class="btn"><u>C</u>ANCEL</button>
            <button class="btn next" aria-label="Next"><svg><use href="#i-chev-r"/></svg></button>
          </div>
        </div>
        <footer class="audit">
          <span class="a-trans">Trans No:<b>1150</b></span>
          <span class="a-input">Input:<b>7/1/25 8:21 AM</b></span>
          <span class="a-by">By:<b>Gb-User</b></span>
          <span class="a-edit">Edited:<b>7/1/25 8:22 AM</b></span>
          <span class="a-by">By:<b>Gb-User</b></span>
        </footer>
      </section>
    </main>
  </div>

  <footer class="taskbar">
    <div class="who">Pristine LLC<br>User: AMBER</div>
    <button class="tile desk">1</button>
    <div class="task">
      <svg class="task-icon"><use href="#i-restore"/></svg>
      <p>Bill: 189<br>All Seasons Plants</p>
      <button aria-label="Close task"><svg class="x"><use href="#i-x"/></svg></button>
    </div>
    <div class="pager">
      <button class="chev" aria-label="Previous desktop"><svg><use href="#i-chev-l"/></svg></button>
      <button class="tile round">1</button>
      <button class="chev" aria-label="Next desktop"><svg><use href="#i-chev-r"/></svg></button>
      <button class="tile add" aria-label="Add desktop"><svg class="sm"><use href="#i-plus"/></svg></button>
    </div>
    <button class="bell" aria-label="Notifications"><svg><use href="#i-bell"/></svg></button>
  </footer>
</body>
</html>
```

FILE: styles.css
```css
* {
  box-sizing: border-box;
}

body {
  margin: 0;
  height: 100vh;
  display: flex;
  flex-direction: column;
  font-family: Inter, "Liberation Sans", sans-serif;
  font-size: 12px;
  color: #505050;
  background: #fff;
}

button,
input,
select {
  font-family: inherit;
  color: inherit;
}

button {
  padding: 0;
  border: none;
  background: none;
  cursor: pointer;
  display: flex;
  align-items: center;
  justify-content: center;
}

h1,
h2,
h3,
p {
  margin: 0;
}

svg {
  display: block;
  flex: none;
  width: 20px;
  height: 20px;
  fill: currentColor;
}

svg.sm {
  width: 16px;
  height: 16px;
}

.sprite {
  position: absolute;
  width: 0;
  height: 0;
}

/* top bar */
.topbar {
  flex: none;
  height: 46px;
  border-bottom: 1px solid #e0e0e0;
  display: flex;
  align-items: center;
  color: #0063b1;
  padding: 0 16px 0 14px;
}

.logo {
  width: 26px;
  height: 26px;
}

.tools {
  display: flex;
  align-items: center;
}

.tools-left {
  margin-left: 30px;
}

.tools-right {
  margin-left: auto;
}

.tools button {
  width: 34px;
  height: 34px;
}

.tools-left button {
  width: 38px;
}

.tools button:disabled {
  opacity: 0.4;
}

.tools svg.lg {
  width: 22px;
  height: 22px;
}

.sep {
  width: 17px;
  height: 16px;
  display: flex;
  justify-content: center;
}

.sep::before {
  content: "";
  width: 1px;
  background: currentColor;
}

.sep.wide {
  width: 21px;
}

/* side bar and desktop */
.workspace {
  flex: 1;
  display: flex;
  min-height: 0;
}

.sidebar {
  width: 56px;
  border-right: 1px solid #e8e8e8;
  padding-top: 11px;
  color: #0063b1;
}

.sidebar button {
  width: 54px;
  height: 30px;
}

.desktop {
  flex: 1;
  padding: 9px;
  display: flex;
  min-width: 0;
}

.panel {
  flex: 1;
  min-width: 0;
  display: flex;
  flex-direction: column;
  border: 1px solid #e0e0e0;
  border-bottom-width: 2px;
}

.panel-head {
  height: 41px;
  display: flex;
  align-items: center;
  border-bottom: 1px solid #e0e0e0;
  padding: 0 15px 0 20px;
  color: #222;
}

.panel-head h1 {
  flex: 1;
  font-family: "Open Sans", "Noto Sans", sans-serif;
  font-size: 18px;
  font-weight: 300;
  color: #12688f;
}

.head-select {
  width: 115px;
  margin-right: 10px;
}

.head-tools {
  display: flex;
  height: 30px;
  margin-left: 14px;
  padding: 0 5px;
  border: solid #d0d0d0;
  border-width: 0 1px;
}

.head-tools button {
  width: 60px;
}

.head-tools button:disabled {
  opacity: 0.4;
}

.panel-close {
  width: 40px;
  margin-left: 15px;
}

.grid-wrap {
  flex: 1;
  display: flex;
  margin-top: 8px;
  border-top: 1px solid #e0e0e0;
}

.grid-main {
  flex: 1;
  min-width: 0;
}

/* data grids */
.grid {
  width: 100%;
  table-layout: fixed;
  border-collapse: separate;
  border-spacing: 0;
}

.grid th,
.grid td {
  border-right: 1px solid #e2e2e2;
  border-bottom: 1px solid #e2e2e2;
  white-space: nowrap;
  overflow: hidden;
}

.grid th {
  height: 41px;
  padding: 0 4px 2px;
  font-size: 13px;
  font-weight: 400;
  color: #444;
}

.grid td {
  height: 28px;
  padding: 0 6px;
}

.grid tbody td:last-child {
  border-right: none;
}

.grid .tight {
  padding: 0 0 2px;
}

.grid .c {
  text-align: center;
  padding: 0;
}

.grid .r,
.paper .r {
  text-align: right;
}

.grid .filter-row td {
  height: 30px;
  background: #f9fbff;
  box-shadow: inset 0 -2px #5b7a9e;
}

.grid .selected td {
  background: #20539a;
  color: #fff;
  font-weight: 600;
}

.w30 { width: 30px; }
.w75 { width: 75px; }
.w100 { width: 100px; }
.w101 { width: 101px; }
.w110 { width: 110px; }
.w115 { width: 115px; }
.w120 { width: 120px; }
.w175 { width: 175px; }
.w180 { width: 180px; }

.page-icon {
  width: 16px;
  height: 16px;
  margin: 0 auto;
}

.minus {
  width: 16px;
  height: 16px;
  margin: 0 auto;
  border-radius: 3px;
  background: #3f51b5;
}

.minus::before {
  content: "";
  width: 8px;
  height: 2px;
  background: #fff;
}

.scroll-col {
  width: 15px;
  display: flex;
  flex-direction: column;
}

.scroll-head {
  height: 71px;
  border-bottom: 1px solid #e2e2e2;
}

.scroll {
  flex: 1;
  display: flex;
  flex-direction: column;
  align-items: center;
  padding: 8px 0;
  background: #fafafa;
  color: #8a8a8a;
}

.scroll svg {
  width: 10px;
  height: 8px;
}

.scroll .end {
  margin-top: auto;
}

.panel-foot {
  height: 36px;
  display: flex;
  align-items: center;
  border-top: 1px solid #e0e0e0;
  padding-left: 20px;
}

.count {
  width: 400px;
}

.totals-label {
  width: 101px;
  padding-left: 64px;
  white-space: nowrap;
}

.count,
.totals-label {
  color: #333;
}

.total {
  width: 120px;
  text-align: right;
  color: #1a7396;
}

/* outlined form fields */
.field {
  position: relative;
  height: 30px;
}

.field label {
  position: absolute;
  top: -6px;
  left: 8px;
  padding: 0 4px;
  font-size: 10px;
  line-height: 12px;
  background: #fff;
  color: #555;
}

.field input,
.field select {
  width: 100%;
  height: 30px;
  padding: 0 9px;
  font-size: 13px;
  color: #505050;
  background: #fff;
  border: 1px solid #d0d0d0;
  border-radius: 4px;
  appearance: none;
  outline: none;
}

.field input::placeholder {
  color: #505050;
  opacity: 1;
}

.field.date input {
  padding: 0 16px 0 0;
  text-align: center;
}

.field.calc {
  width: 83px;
}

.field.calc input {
  padding: 0;
  text-align: center;
  color: #12709c;
}

.caret {
  position: absolute;
  top: 12px;
  right: 8px;
  width: 8px;
  height: 7px;
  color: #222;
  pointer-events: none;
}

.cal {
  position: absolute;
  top: 7px;
  right: 5px;
  width: 16px;
  height: 16px;
  color: #222;
}

/* floating windows */
.window {
  position: absolute;
  display: flex;
  flex-direction: column;
  background: #fff;
  border: 2px solid #d3d3d3;
  border-radius: 9px;
  overflow: hidden;
}

.win-head {
  flex: none;
  height: 40px;
  display: flex;
  align-items: center;
  padding-left: 8px;
  background: #c1c1c1;
  color: #fff;
}

.win-head h2 {
  flex: 1;
  font-size: 14px;
  font-weight: 600;
}

.win-head button {
  width: 38px;
  height: 38px;
}

svg.menu {
  width: 16px;
  height: 14px;
}

svg.xs {
  width: 12px;
  height: 12px;
}

svg.x {
  width: 15px;
  height: 15px;
}

svg.fold {
  width: 17px;
  height: 17px;
}

/* report window */
.report {
  left: 149px;
  top: 319px;
  width: 1132px;
  height: 574px;
}

.report .win-head {
  background: #35579b;
}

.report-body {
  flex: 1;
  display: flex;
  min-height: 0;
}

.rail {
  width: 50px;
  background: #35579b;
  color: #fff;
  display: flex;
  flex-direction: column;
  align-items: center;
}

.rail button {
  width: 30px;
  height: 50px;
}

.rail button:first-child,
.rail button:last-child {
  border-bottom: 1px solid #6680b5;
}

.rail svg {
  width: 24px;
  height: 24px;
}

.filters {
  width: 230px;
  border-right: 1px solid #ddd;
}

.filters h3 {
  height: 50px;
  padding-left: 15px;
  background: #f0f0f0;
  border-bottom: 1px solid #d5d5d5;
  font-size: 12px;
  font-weight: 700;
  line-height: 49px;
  color: #1f5f7a;
}

.filter-fields {
  display: flex;
  flex-direction: column;
  gap: 16px;
  padding: 17px 16px;
}

.viewer {
  flex: 1;
  display: flex;
  flex-direction: column;
  min-width: 0;
}

.viewer-bar {
  flex: none;
  height: 50px;
  display: flex;
  align-items: center;
  padding: 2px 13px 0 2px;
  background: #f0f0f0;
  border-bottom: 2px solid #d8d8d8;
  color: #1f607a;
}

.viewer-bar button {
  width: 45px;
  height: 40px;
}

.viewer-bar button:disabled {
  opacity: 0.4;
}

.viewer-bar svg {
  width: 22px;
  height: 22px;
}

.viewer-bar svg.md {
  width: 20px;
  height: 20px;
}

.viewer-bar .sep {
  width: 6px;
  height: 20px;
  color: #d5d5d5;
}

.page-no {
  width: 105px;
  text-align: center;
  color: #a0b8c4;
}

.zoom-level {
  width: 35px;
  padding-top: 14px;
  line-height: 14px;
  text-align: center;
  white-space: nowrap;
  color: #555;
}

.more {
  margin-left: auto;
}

.viewer-body {
  flex: 1;
  display: flex;
  min-height: 0;
  background: #e5e5e5;
}

.paper {
  flex: 1;
  margin: 41px 8px 0 9px;
  padding: 51px 48px 0;
  background: #fff;
  box-shadow: 0 0 4px rgba(0, 0, 0, 0.15);
  font-family: Lato, sans-serif;
  font-size: 11px;
  color: #000;
}

.paper-head {
  display: flex;
  justify-content: space-between;
  align-items: flex-end;
  height: 30px;
  padding: 0 3px 4px 2px;
  border-bottom: 1px solid #000;
}

.paper-head h3 {
  font-size: 17px;
  font-weight: 400;
  line-height: 22px;
  color: #5b5bdc;
}

.paper b {
  font-weight: 400;
  color: #5b5bdc;
}

.paper-params {
  padding: 2px;
}

.paper-params p {
  display: flex;
  line-height: 17px;
}

.p-account { width: 61px; }
.p-from { width: 41px; }
.p-date { width: 75px; }
.p-to { width: 24px; }

.paper table {
  width: 100%;
  table-layout: fixed;
  border-spacing: 0;
}

.paper th {
  height: 20px;
  padding: 0 2px;
  font-weight: 400;
  text-align: left;
  border: solid #000;
  border-width: 1px 0;
}

.paper td {
  height: 19px;
  padding: 0 2px;
}

.paper th:last-child,
.paper td:last-child {
  padding-right: 7px;
}

.paper tbody::before {
  content: "";
  display: table-row;
  height: 4px;
}

.paper tfoot td {
  height: 50px;
  white-space: nowrap;
}

.paper a {
  color: #4aa3ee;
}

.c-no { width: 96px; }
.c-date { width: 58px; }
.c-vendor { width: 246px; }
.c-ref { width: 80px; }
.c-amt { width: 82px; }

.paper .tot {
  padding-right: 16px;
}

.viewer-body .scroll {
  flex: none;
  width: 14px;
}

.thumb {
  width: 9px;
  height: 184px;
  margin-top: 8px;
  border-radius: 5px;
  background: #8a8a8a;
}

/* bill windows */
.bill {
  width: 900px;
  height: 625px;
}

.bill-168 {
  left: 1371px;
  top: 306px;
}

.bill-188 {
  left: 1537px;
  top: 683px;
}

.bill h2 {
  padding-left: 8px;
}

.win-head .attach {
  position: relative;
  width: 42px;
  justify-content: flex-start;
  padding-left: 7px;
}

.attach span {
  position: absolute;
  left: 25px;
  font-size: 14px;
}

.bill-body {
  flex: 1;
  display: flex;
  flex-direction: column;
  gap: 15px;
  min-height: 0;
  padding: 15px;
}

.card {
  border: 1px solid #8e1c44;
  padding: 11px 15px 15px;
}

.card-top {
  display: flex;
  gap: 10px;
  height: 90px;
}

.party {
  flex: 1;
}

.party address {
  padding-left: 4px;
  font-style: normal;
  line-height: 20px;
  color: #12709c;
}

.vendor {
  width: 238px;
  margin: 4px 0;
}

.stamp {
  position: relative;
  width: 120px;
  height: 58px;
  margin-top: 4px;
  border: 1px solid #8e1c44;
  border-radius: 4px;
  overflow: hidden;
}

.stamp label {
  display: block;
  height: 26px;
  line-height: 26px;
  font-size: 13px;
  font-weight: 600;
  text-align: center;
  color: #fff;
  background: #8e1c44;
}

.stamp input {
  width: 100%;
  height: 30px;
  border: none;
  font-size: 13px;
  text-align: center;
  color: #505050;
}

.stamp.date input {
  padding: 0 17px 0 0;
}

.stamp .cal {
  top: 33px;
}

.card-row {
  display: flex;
  gap: 8px;
  margin-bottom: 8px;
}

.grow {
  flex: 1;
}

.lines {
  flex: 1;
  display: flex;
  min-height: 0;
  border: 1px solid #e2e2e2;
}

.lines td {
  padding: 0 10px 1px;
}

.lines .scroll-head {
  height: 41px;
}

.lines.muted td {
  color: #aaa;
}

.actions {
  display: flex;
  gap: 12px;
  height: 35px;
}

.btn {
  min-width: 85px;
  height: 35px;
  font-size: 13px;
  font-weight: 600;
  color: #fff;
  background: #68a1d8;
  border-radius: 4px;
  box-shadow: 0 2px 3px rgba(0, 0, 0, 0.3);
}

.btn:disabled {
  background: #808080;
  color: #d8d8d8;
  box-shadow: none;
}

.icon-btn {
  min-width: 48px;
}

.next {
  min-width: 32px;
}

.next svg {
  width: 14px;
  height: 14px;
}

.save {
  margin-left: auto;
}

.sums {
  margin-left: 3px;
  border-collapse: collapse;
  text-align: center;
}

.sums th,
.sums td {
  width: 100px;
  height: 17px;
  padding: 0;
  border: 1px solid #e2e2e2;
  font-weight: 400;
  color: #333;
}

.sums td {
  color: #12709c;
}

.audit {
  flex: none;
  height: 30px;
  display: flex;
  align-items: center;
  padding-left: 15px;
  border-top: 2px solid #c0c0c0;
  white-space: nowrap;
  color: #333;
}

.audit b {
  margin-left: 2px;
  font-weight: 500;
  color: #12709c;
}

.a-trans { width: 122px; }
.a-input { width: 152px; }
.a-by { width: 135px; }
.a-edit { width: 160px; }

/* task bar */
.taskbar {
  flex: none;
  height: 50px;
  display: flex;
  align-items: center;
  background: #0063b3;
  color: #fff;
}

.who {
  width: 243px;
  height: 50px;
  padding: 11px 17px;
  border-right: 1px solid #fff;
  background: #1464b2;
  color: #cfe0f2;
  font-size: 11px;
  line-height: 14px;
}

.tile {
  width: 35px;
  height: 35px;
  border: 1px solid #fff;
  border-radius: 6px;
  font-size: 15px;
  font-weight: 700;
  color: #fff;
}

.desk {
  margin: 0 8px 0 21px;
}

.task {
  width: 249px;
  height: 42px;
  display: flex;
  align-items: center;
  border: 1px solid #cfe0f2;
  border-radius: 5px;
  padding: 0 4px 0 10px;
}

.task-icon {
  width: 14px;
  height: 14px;
  margin-right: 9px;
}

.task p {
  flex: 1;
  font-weight: 600;
  line-height: 15px;
}

.task button {
  align-self: flex-start;
  height: 22px;
}

.pager {
  margin-left: auto;
  display: flex;
}

.chev {
  width: 40px;
  color: #8fa8c8;
}

.chev svg {
  width: 14px;
  height: 14px;
}

.round {
  border-radius: 50%;
}

.add {
  margin: 0 16px 0 4px;
}

.bell {
  width: 49px;
  height: 50px;
  border-left: 1px solid #fff;
}

.bell svg {
  width: 16px;
  height: 16px;
}
```
